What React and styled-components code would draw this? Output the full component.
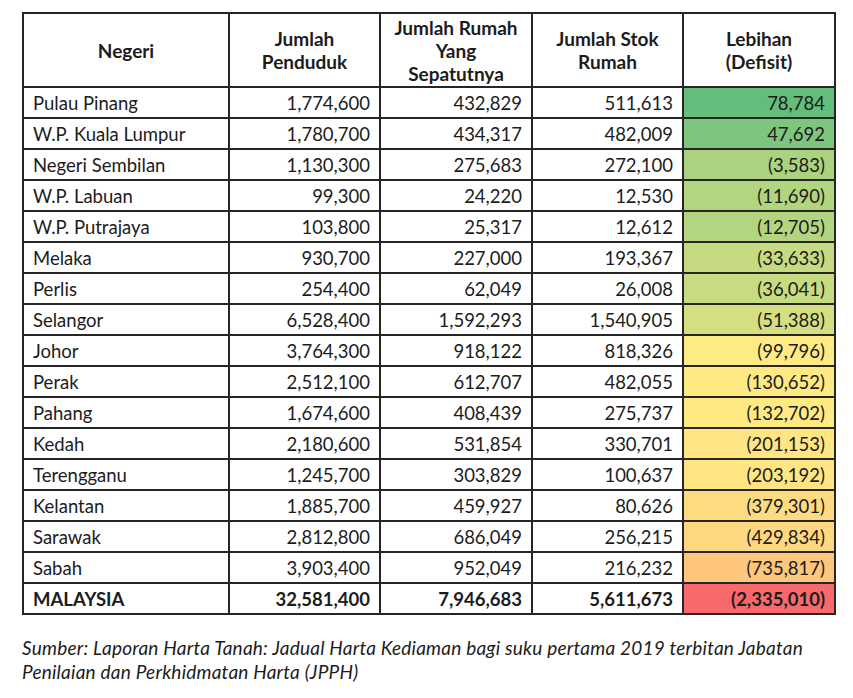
import React from "react";
import styled, { createGlobalStyle } from "styled-components";

const GlobalStyle = createGlobalStyle`
  body {
    margin: 0;
    background: #ffffff;
    font-family: "Lato", "Liberation Sans", sans-serif;
    color: #1c1c1c;
  }
`;

const Page = styled.div`
  width: 853px;
  height: 698px;
  padding: 12px 0 0 22px;
  box-sizing: border-box;
`;

const Grid = styled.div`
  display: grid;
  grid-template-columns: 204px 149px 150px 149px 150px;
  grid-template-rows: 72px;
  grid-auto-rows: 29px;
  gap: 2px;
  padding: 2px;
  background: #262626;
  width: max-content;
`;

const HeadCell = styled.div`
  background: #fff;
  display: flex;
  align-items: center;
  justify-content: center;
  text-align: center;
  font-weight: 700;
  font-size: 19px;
  line-height: 23px;
`;

const Cell = styled.div`
  background: ${(p) => p.$bg || "#fff"};
  display: flex;
  align-items: center;
  justify-content: ${(p) => (p.$left ? "flex-start" : "flex-end")};
  padding: ${(p) => (p.$left ? "0 0 0 9px" : "0 9px 0 0")};
  font-size: 18.5px;
  font-weight: ${(p) => (p.$bold ? 700 : 400)};
  white-space: nowrap;
`;

const Note = styled.p`
  margin: 21px 0 0 0;
  font-style: italic;
  font-size: 19px;
  letter-spacing: 0.22px;
  line-height: 24px;
  white-space: nowrap;
`;

const rows = [
  ["Pulau Pinang", "1,774,600", "432,829", "511,613", "78,784", "#63be7b"],
  ["W.P. Kuala Lumpur", "1,780,700", "434,317", "482,009", "47,692", "#7ec67d"],
  ["Negeri Sembilan", "1,130,300", "275,683", "272,100", "(3,583)", "#abd37f"],
  ["W.P. Labuan", "99,300", "24,220", "12,530", "(11,690)", "#b2d580"],
  ["W.P. Putrajaya", "103,800", "25,317", "12,612", "(12,705)", "#b3d580"],
  ["Melaka", "930,700", "227,000", "193,367", "(33,633)", "#c5da81"],
  ["Perlis", "254,400", "62,049", "26,008", "(36,041)", "#c7db81"],
  ["Selangor", "6,528,400", "1,592,293", "1,540,905", "(51,388)", "#d5df82"],
  ["Johor", "3,764,300", "918,122", "818,326", "(99,796)", "#ffeb84"],
  ["Perak", "2,512,100", "612,707", "482,055", "(130,652)", "#ffe983"],
  ["Pahang", "1,674,600", "408,439", "275,737", "(132,702)", "#ffe983"],
  ["Kedah", "2,180,600", "531,854", "330,701", "(201,153)", "#ffe583"],
  ["Terengganu", "1,245,700", "303,829", "100,637", "(203,192)", "#ffe583"],
  ["Kelantan", "1,885,700", "459,927", "80,626", "(379,301)", "#fedb81"],
  ["Sarawak", "2,812,800", "686,049", "256,215", "(429,834)", "#fed880"],
  ["Sabah", "3,903,400", "952,049", "216,232", "(735,817)", "#fcc67c"],
];

const total = ["MALAYSIA", "32,581,400", "7,946,683", "5,611,673", "(2,335,010)", "#f8696b"];

const headers = [
  "Negeri",
  <>Jumlah<br />Penduduk</>,
  <>Jumlah Rumah<br />Yang<br />Sepatutnya</>,
  <>Jumlah Stok<br />Rumah</>,
  <>Lebihan<br />(Defisit)</>,
];

const Row = ({ data, bold }) => (
  <>
    <Cell $left $bold={bold}>{data[0]}</Cell>
    <Cell $bold={bold}>{data[1]}</Cell>
    <Cell $bold={bold}>{data[2]}</Cell>
    <Cell $bold={bold}>{data[3]}</Cell>
    <Cell $bold={bold} $bg={data[5]}>{data[4]}</Cell>
  </>
);

export default function App() {
  return (
    <>
      <GlobalStyle />
      <Page>
        <Grid>
          {headers.map((h, i) => (
            <HeadCell key={i}>{h}</HeadCell>
          ))}
          {rows.map((r) => (
            <Row key={r[0]} data={r} />
          ))}
          <Row data={total} bold />
        </Grid>
        <Note>
          Sumber: Laporan Harta Tanah: Jadual Harta Kediaman bagi suku pertama 2019 terbitan Jabatan
          <br />
          Penilaian dan Perkhidmatan Harta (JPPH)
        </Note>
      </Page>
    </>
  );
}
